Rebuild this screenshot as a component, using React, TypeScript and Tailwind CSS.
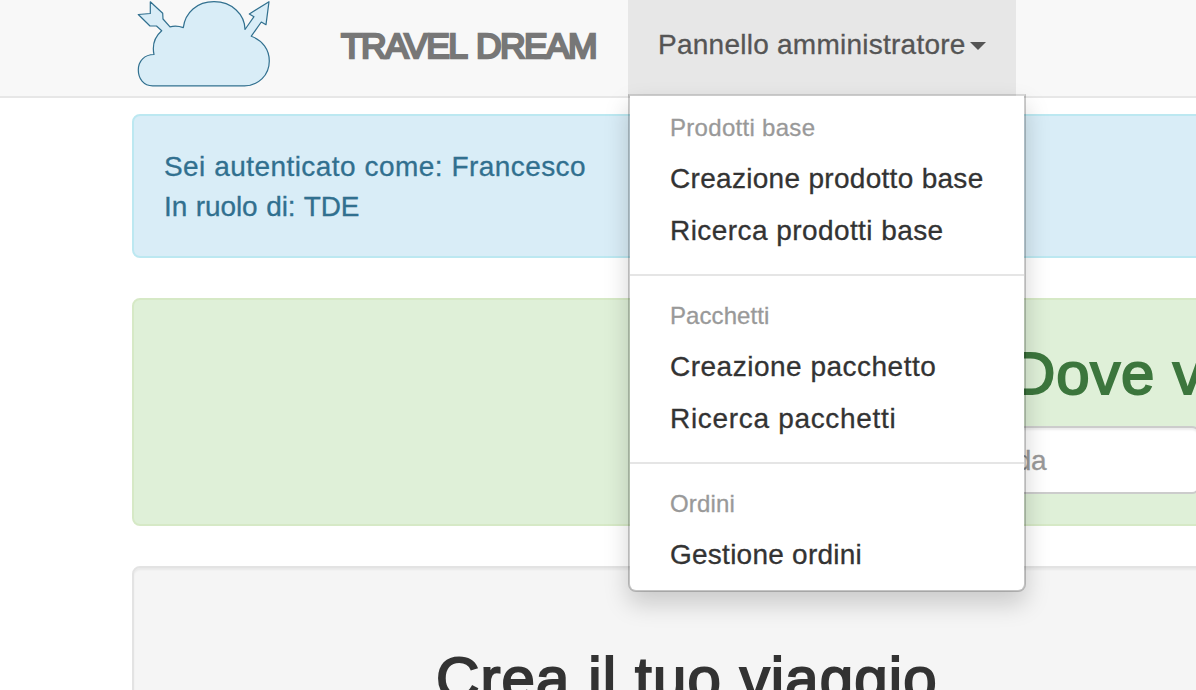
import React from "react";

const groups = [
  { title: "Prodotti base", track: "tracking-[0.3px]", items: [
    { label: "Creazione prodotto base", track: "tracking-[0.3px]" },
    { label: "Ricerca prodotti base", track: "tracking-[0.43px]" },
  ] },
  { title: "Pacchetti", track: "tracking-[0.08px]", items: [
    { label: "Creazione pacchetto", track: "tracking-[0.5px]" },
    { label: "Ricerca pacchetti", track: "tracking-[0.68px]" },
  ] },
  { title: "Ordini", track: "tracking-[0.15px]", items: [{ label: "Gestione ordini", track: "tracking-[0.25px]" }] },
];

function CloudLogo() {
  return (
    <svg className="h-[90px] w-[136px] shrink-0" viewBox="0 0 136 90" fill="#d9edf7" stroke="#31708f" strokeWidth="1.2">
      <path d="M16.7 85.8 C7.5 85.8 2.3 78.5 2.3 70 C2.3 61 8.5 54.5 18 54.5 C16 45 18.5 37 25.7 30.7 L20.5 26 L14 26 L2.3 14.5 L14.3 13.5 L14.3 1.8 L26.7 13.2 L27 19 L34 26.8 C38.5 25.6 43 26 47.3 27.6 C49.2 12.5 61 1.7 78 1.7 C96 1.7 108.8 14.5 109 29.5 L118 16.7 L113.3 14 L133 1.7 L130 24.7 L125.3 22 L115.3 36.2 C126.5 40.5 133.3 49.5 133.3 61 C133.3 75 122.5 85.8 108.5 85.8 Z" strokeLinejoin="round" />
    </svg>
  );
}

function AdminMenu() {
  return (
    <div className="absolute left-0 top-[94px] z-10 w-[398px] rounded-b-lg border-2 border-black/20 border-t-black/12 bg-white bg-clip-padding py-[10px] shadow-[0_12px_24px_rgba(0,0,0,0.175)]">
      {groups.map((group, index) => (
        <div key={group.title}>
          {index > 0 && <div className="my-[18px] h-[2px] bg-[#e5e5e5]" />}
          <div className={`h-[46px] px-10 pt-[5px] text-2xl leading-[34px] text-[#999] ${group.track}`}>{group.title}</div>
          {group.items.map((item) => (
            <div key={item.label} className={`h-[52px] px-10 pt-[7px] leading-10 whitespace-nowrap text-[#333] ${item.track}`}>{item.label}</div>
          ))}
        </div>
      ))}
    </div>
  );
}

export default function App() {
  return (
    <div className="h-[690px] w-[1196px] overflow-hidden bg-white font-['Liberation_Sans',Arial,sans-serif] text-[28px] text-[#333] [-webkit-text-stroke:0.3px_currentColor]">
      <nav className="flex h-[98px] border-b-2 border-[#e7e7e7] bg-[#f8f8f8] pl-[136px]">
        <CloudLogo />
        <div className="w-[356px] pl-[69px] pt-[22px] text-[35.5px] leading-[48px] tracking-[-1.7px] whitespace-nowrap text-[#777] [word-spacing:3px] [-webkit-text-stroke:2.4px_#777]">TRAVEL DREAM</div>
        <div className="relative h-24 w-[388px] bg-[#e7e7e7]">
          <div className="flex items-center pl-[30px] pt-[25px] leading-10 tracking-[0.25px] whitespace-nowrap text-[#555]">
            <span>Pannello amministratore</span>
            <svg className="ml-1 mt-[2px] h-2 w-4" viewBox="0 0 16 8" fill="#555"><path d="M0 0H16L8 8Z" /></svg>
          </div>
          <AdminMenu />
        </div>
      </nav>
      <main className="ml-[132px] mt-4 flex w-[2340px] flex-col gap-10">
        <section className="h-36 rounded-lg border-2 border-[#bce8f1] bg-[#d9edf7] px-[30px] pt-[31px] leading-10 text-[#31708f]">
          <p className="tracking-[0.42px] [word-spacing:0.4px]">Sei autenticato come: Francesco</p>
          <p className="tracking-[-0.1px] [word-spacing:1px]">In ruolo di: TDE</p>
        </section>
        <section className="h-[228px] rounded-lg border-2 border-[#d6e9c6] bg-[#dff0d8] pl-[520px] pt-[41px] text-[#3c763d]">
          <h2 className="pl-[358px] text-[60px] leading-[66px] tracking-[0.8px] whitespace-nowrap [-webkit-text-stroke:2px_#3c763d]">Dove vuoi andare?</h2>
          <div className="mt-[19px] h-[68px] w-[546px] rounded-lg border-2 border-[#ccc] bg-white pr-[152px] text-right leading-[66px] tracking-[-0.5px] text-[#999] shadow-[inset_0_2px_2px_rgba(0,0,0,0.075)]">Località di partenza o agenda</div>
        </section>
        <section className="h-[400px] rounded-lg border-2 border-[#e3e3e3] bg-[#f5f5f5] pl-[302px] pt-[78px] shadow-[inset_0_2px_2px_rgba(0,0,0,0.05)]">
          <h2 className="text-[60px] leading-[66px] tracking-[1.13px] whitespace-nowrap [-webkit-text-stroke:2px_#333]">Crea il tuo viaggio</h2>
        </section>
      </main>
    </div>
  );
}
